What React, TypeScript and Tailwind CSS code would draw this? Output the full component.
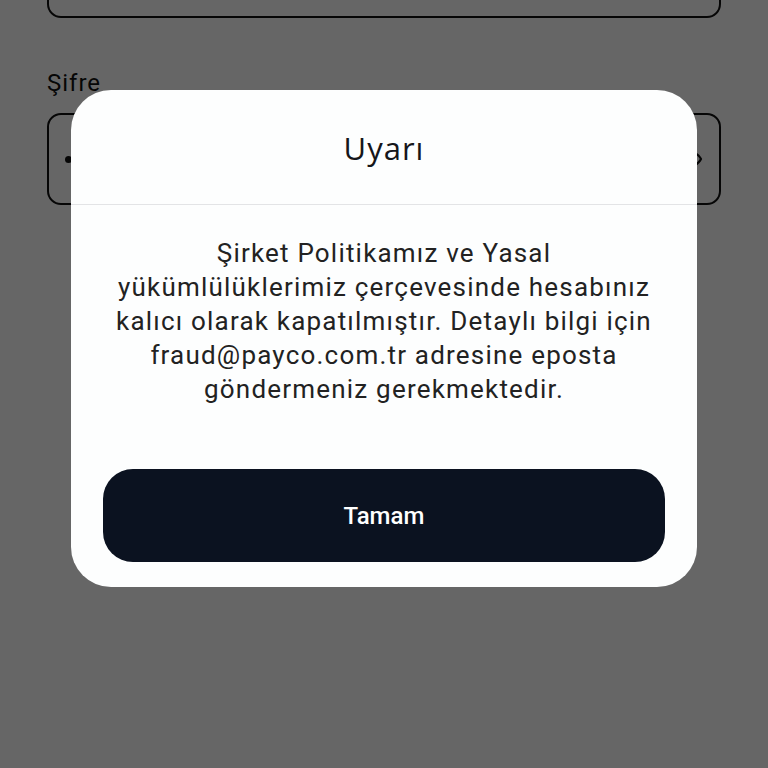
import React from 'react';

const messageLines = [
  'Şirket Politikamız ve Yasal',
  'yükümlülüklerimiz çerçevesinde hesabınız',
  'kalıcı olarak kapatılmıştır. Detaylı bilgi için',
  'fraud@payco.com.tr adresine eposta',
  'göndermeniz gerekmektedir.',
];

function App() {
  return (
    <div className="relative w-[768px] h-[768px] overflow-hidden bg-white" style={{ fontFamily: 'Roboto, "Liberation Sans", sans-serif' }}>
      {/* Login form behind the dialog */}
      <div className="px-[47px]">
        <div className="-mt-[74px] h-[92px] rounded-[14px] border-2 border-[#111]" />
        <div className="mt-[50px] text-[24px] leading-[30px] tracking-[1px] text-[#111]">Şifre</div>
        <div className="mt-[15px] h-[92px] rounded-[14px] border-2 border-[#111] flex items-center justify-between px-[16px]">
          <div className="flex gap-2">
            {Array.from({ length: 8 }).map((_, i) => (
              <span key={i} className="w-[7px] h-[7px] rounded-full bg-[#111]" />
            ))}
          </div>
          <svg className="w-6 h-6" viewBox="0 0 24 24" fill="none" stroke="#111" strokeWidth={2.2} strokeLinecap="round" strokeLinejoin="round">
            <path d="M2 12s3.5-7 10-7 10 7 10 7-3.5 7-10 7S2 12 2 12z" />
            <circle cx="12" cy="12" r="3" />
          </svg>
        </div>
      </div>

      {/* Overlay */}
      <div className="absolute inset-0 bg-black/60 flex justify-center items-start pt-[90px]">
        <div className="w-[626px] bg-[#fdfefe] rounded-[40px] flex flex-col">
          <div className="h-[115px] flex items-center justify-center border-b border-[#e3e4e6]">
            <h2 className="text-[31px] tracking-[1px] text-[#15161a] pt-[2px]" style={{ fontFamily: '"Open Sans", Lato, sans-serif' }}>
              Uyarı
            </h2>
          </div>
          <p className="pt-[31px] text-center text-[26px] leading-[34px] tracking-[1.2px] text-[#222]">
            {messageLines.map((line, i) => (
              <React.Fragment key={i}>
                {line}
                {i < messageLines.length - 1 && <br />}
              </React.Fragment>
            ))}
          </p>
          <div className="px-[32px] pt-[63px] pb-[25px]">
            <button className="w-full h-[93px] rounded-[30px] bg-[#0b1220] text-white text-[24px] font-medium">
              Tamam
            </button>
          </div>
        </div>
      </div>
    </div>
  );
}

export default App;
